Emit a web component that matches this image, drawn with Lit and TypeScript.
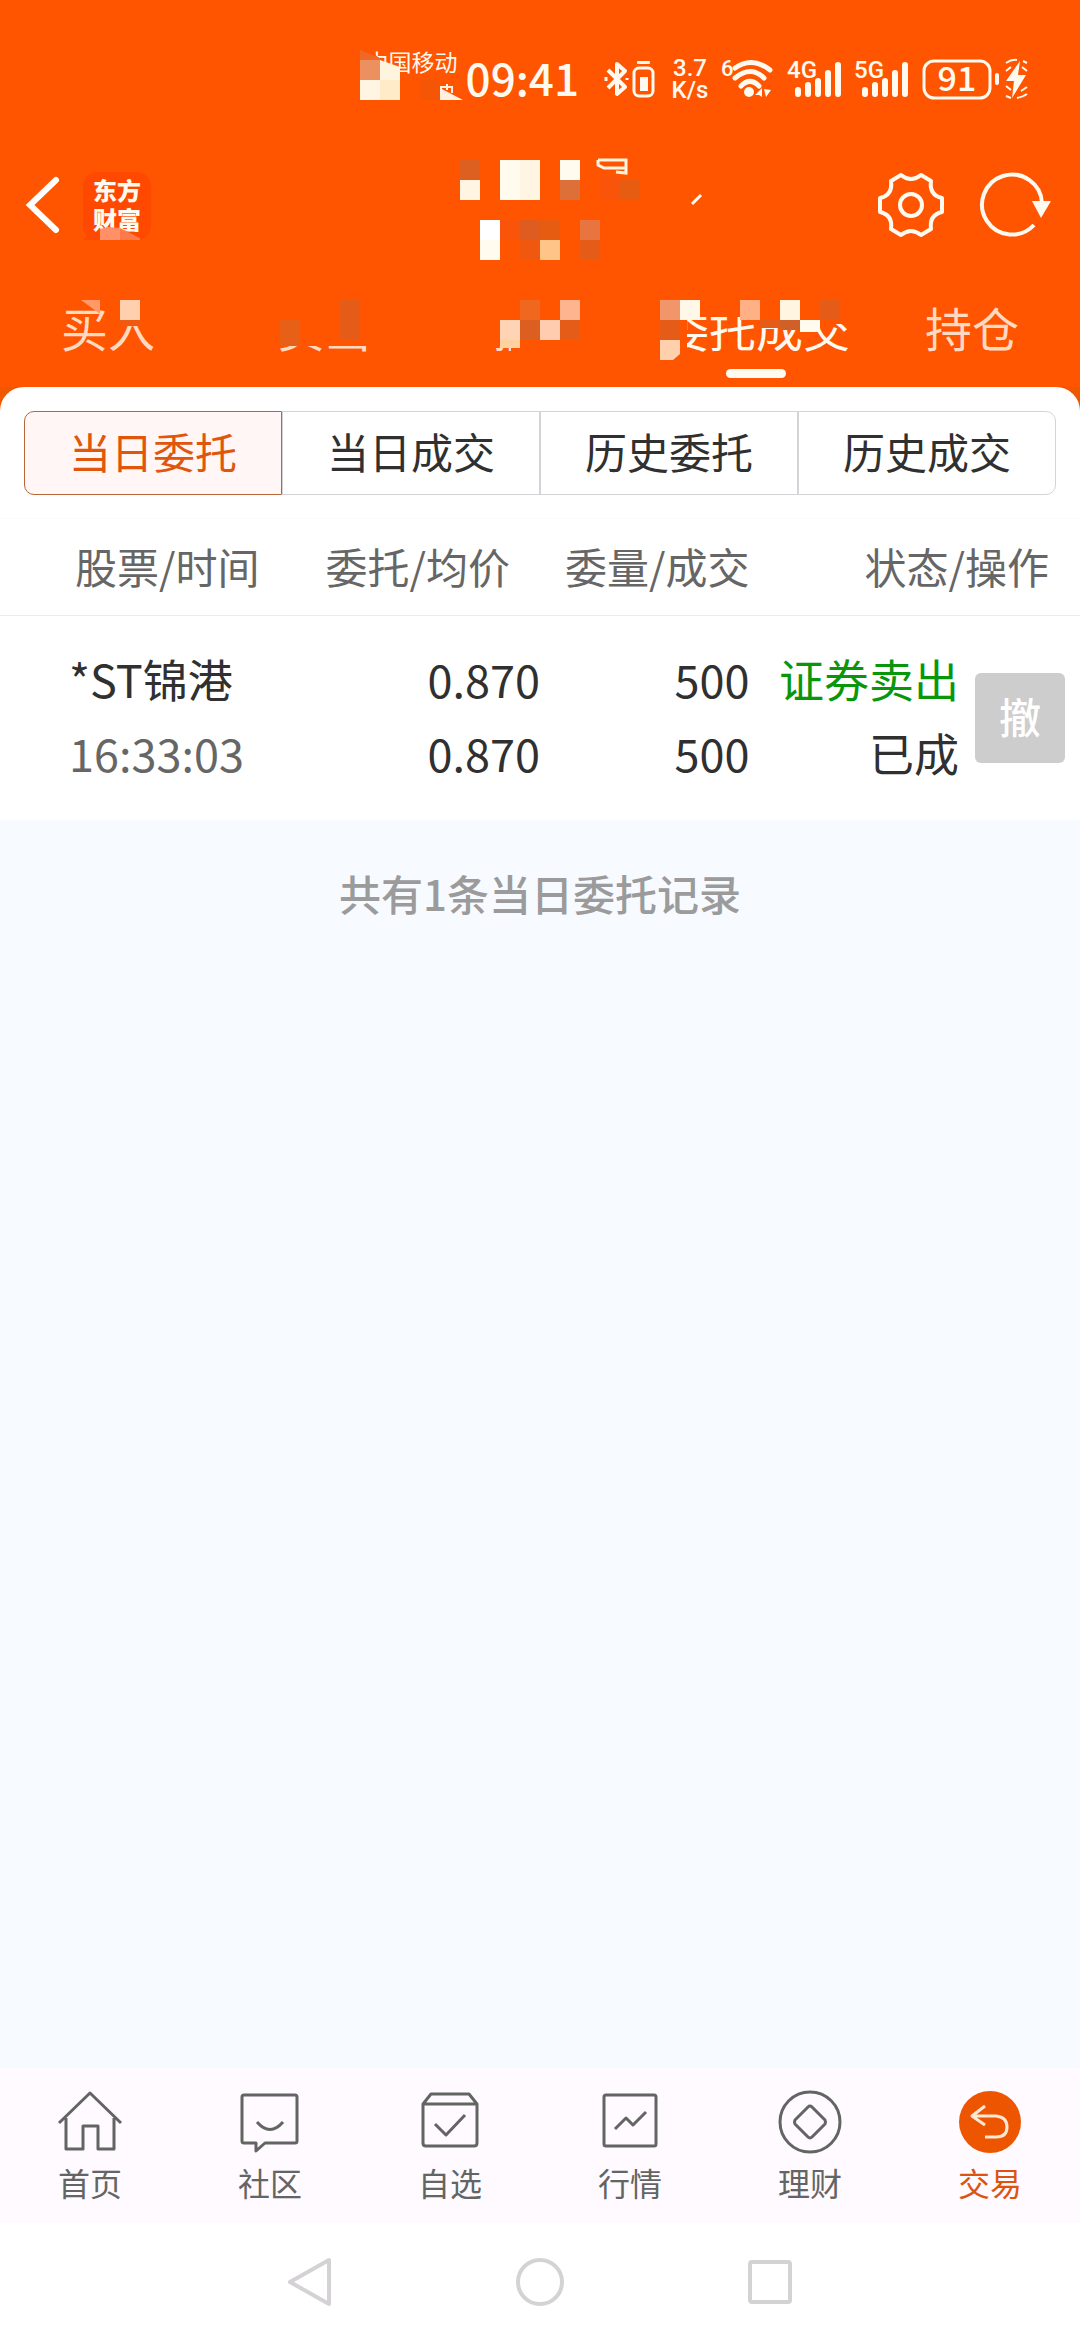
import { LitElement, html, svg, css } from "lit";
import { customElement, state } from "lit/decorators.js";
import { classMap } from "lit/directives/class-map.js";

interface Order {
  name: string;
  time: string;
  price: string;
  avg: string;
  qty: string;
  filled: string;
  side: string;
  status: string;
}

const ORDERS: Order[] = [
  {
    name: "*ST锦港",
    time: "16:33:03",
    price: "0.870",
    avg: "0.870",
    qty: "500",
    filled: "500",
    side: "证券卖出",
    status: "已成",
  },
];

const TABS = ["买入", "卖出", "撤单", "委托成交", "持仓"];
const SEGMENTS = ["当日委托", "当日成交", "历史委托", "历史成交"];

const MENU = [
  {
    label: "首页",
    icon: svg`<path d="M1 33 32 3 63 33M8 28V59H25V36H40V59H56V28"/>`,
  },
  {
    label: "社区",
    icon: svg`<path d="M6 5H57Q59 5 59 7V51Q59 53 57 53H27L18 61V53H6Q4 53 4 51V7Q4 5 6 5ZM19 32Q32 47 45 32"/>`,
  },
  {
    label: "自选",
    icon: svg`<path d="M5 14V53Q5 56 8 56H56Q59 56 59 53V14L51 4H13ZM5 14H59M17 34 28 45 47 25"/>`,
  },
  {
    label: "行情",
    icon: svg`<rect x="6" y="5" width="52" height="51" rx="2"/><path d="M17 39 28 28 35 35 48 22"/>`,
  },
  {
    label: "理财",
    icon: svg`<circle cx="32" cy="32" r="30"/><path d="M30 17Q32 15 34 17L47 30Q48 32 47 34L34 47Q32 49 30 47L17 34Q16 32 17 30Z"/>`,
  },
  {
    label: "交易",
    icon: svg`<circle class="disc" cx="32" cy="32" r="31"/><path class="arrow" d="M27 16 14 26 27 35M15 26H38Q49 27 49 37T38 47H27"/>`,
  },
];

const signal = (label: string) => html`
  <svg class="signal" width="54" height="41" viewBox="0 0 54 41" role="img" aria-label=${label}>
    <text x="-1" y="19" font-size="24">${label}</text>
    <path d="M10 31V35M20 26V35M30 22V35M40 14V35M50 6V35" stroke-width="6" stroke-linecap="round" />
  </svg>
`;

// Privacy mosaic: [x, y, width, height, colour]
const COVER: [number, number, number, number, string][] = [
  [360, 60, 20, 20, "#ed9060"],
  [360, 80, 20, 20, "#fff5e2"],
  [380, 80, 20, 20, "#ffebc8"],
  [420, 80, 20, 20, "#f45606"],
  [460, 160, 20, 20, "#de6020"],
  [460, 180, 20, 20, "#fff5e2"],
  [500, 160, 20, 40, "#fffbee"],
  [520, 160, 20, 40, "#fff5e2"],
  [560, 160, 20, 20, "#fffbee"],
  [560, 180, 20, 20, "#dc7038"],
  [600, 175, 20, 25, "#fa540a"],
  [620, 180, 20, 20, "#e65c10"],
  [480, 220, 20, 20, "#ffffff"],
  [480, 240, 20, 20, "#fffbee"],
  [500, 220, 20, 20, "#fa540a"],
  [520, 220, 20, 20, "#de5c20"],
  [540, 220, 20, 20, "#e65c10"],
  [520, 240, 20, 20, "#f05810"],
  [540, 240, 20, 20, "#ffc488"],
  [580, 220, 20, 20, "#e87440"],
  [580, 240, 20, 20, "#e45c18"],
  [100, 300, 56, 8, "#ff5500"],
  [120, 300, 20, 20, "#ffcfae"],
  [120, 320, 20, 6, "#f05a10"],
  [270, 296, 104, 50, "#ff5500"],
  [280, 320, 20, 26, "#e66018"],
  [340, 300, 20, 40, "#e45c18"],
  [486, 296, 108, 50, "#ff5500"],
  [511, 340, 84, 18, "#ff5500"],
  [520, 300, 20, 20, "#f06820"],
  [560, 300, 20, 20, "#ffb490"],
  [500, 320, 20, 20, "#ffd4b4"],
  [520, 320, 20, 20, "#dc5e20"],
  [540, 320, 20, 20, "#ffccb0"],
  [560, 320, 20, 20, "#e45c18"],
  [500, 340, 20, 8, "#ffd0a0"],
  [656, 300, 31, 60, "#ff5500"],
  [680, 296, 174, 21, "#ff5500"],
  [754, 300, 100, 24, "#ff5500"],
  [660, 300, 20, 20, "#f0966a"],
  [680, 300, 20, 20, "#fff8e8"],
  [660, 320, 20, 20, "#e45c18"],
  [740, 300, 20, 20, "#ffb084"],
  [780, 300, 20, 20, "#fff5e0"],
  [820, 300, 20, 20, "#e45c18"],
  [760, 320, 20, 8, "#e45c18"],
  [780, 320, 20, 10, "#d06028"],
  [800, 320, 20, 12, "#fffbee"],
];

@customElement("app-root")
export class AppRoot extends LitElement {
  @state() private tab = 3;
  @state() private segment = 0;

  static styles = css`
    :host {
      display: flex;
      flex-direction: column;
      min-height: 100vh;
      background: #f7faff;
      color: #303030;
      font-family: "Noto Sans CJK SC", "Noto Sans", sans-serif;
      font-size: 42px;
    }
    * {
      box-sizing: border-box;
    }
    button {
      margin: 0;
      padding: 0;
      border: 0;
      background: none;
      color: inherit;
      font: inherit;
    }
    svg {
      display: block;
      flex: none;
      overflow: visible;
    }
    .top {
      position: relative;
      background: #ff5500;
      color: #fffaf0;
    }
    .cover {
      position: absolute;
      top: 0;
      left: 0;
      width: 100%;
      pointer-events: none;
    }
    .status {
      display: flex;
      justify-content: flex-end;
      padding: 59px 52px 0 0;
      height: 100px;
    }
    .status svg {
      fill: currentColor;
      stroke: none;
    }
    .status path {
      stroke: currentColor;
    }
    .status .line {
      fill: none;
      stroke: currentColor;
    }
    .status .solid {
      stroke: none;
    }
    .carrier {
      font-size: 23px;
      line-height: 22px;
      margin-top: -9px;
      margin-right: 8px;
    }
    .clock {
      font-size: 44px;
      font-weight: 500;
      line-height: 36px;
      margin-right: 24px;
    }
    .speed {
      display: flex;
      flex-direction: column;
      align-items: center;
      width: 38px;
      font-family: Roboto, sans-serif;
      font-size: 24px;
      line-height: 22px;
      margin: -2px 12px 0 14px;
      font-weight: 500;
    }
    .signal {
      margin-left: 13px;
      font-family: Roboto, sans-serif;
      font-weight: 500;
    }
    .charge {
      margin-left: 13px;
      font-weight: 500;
    }
    .bar {
      display: flex;
      align-items: center;
      padding: 70px 27px 0 26px;
      height: 142px;
    }
    .back {
      margin-right: 23px;
    }
    .brand {
      display: flex;
      flex-direction: column;
      align-items: center;
      justify-content: center;
      width: 68px;
      height: 68px;
      padding-bottom: 4px;
      border-radius: 14px;
      background: #ff4800;
      font-size: 24px;
      font-weight: 900;
      line-height: 29px;
      margin-right: auto;
    }
    .tool + .tool {
      margin-left: 35px;
    }
    .tabs {
      display: grid;
      grid-template-columns: repeat(5, 1fr);
      padding: 55px 0 9px;
    }
    .tab {
      display: flex;
      flex-direction: column;
      align-items: center;
      gap: 12px;
      font-size: 47px;
      line-height: 60px;
      color: #ffd9c0;
      white-space: nowrap;
    }
    .tab::after {
      content: "";
      width: 60px;
      height: 9px;
      border-radius: 5px;
    }
    .tab.on {
      color: #fffaf0;
    }
    .tab.on::after {
      background: #fffaf0;
    }
    .backing {
      background: #f05800;
    }
    .sheet {
      background: #fff;
      border-radius: 24px 24px 0 0;
      padding-top: 24px;
    }
    .segments {
      display: grid;
      grid-template-columns: repeat(4, 1fr);
      margin: 0 24px 23px;
    }
    .segment {
      height: 84px;
      border: 1px solid #d4d4d8;
      line-height: 78px;
      padding-bottom: 4px;
    }
    .segment:first-child {
      border-radius: 10px 0 0 10px;
    }
    .segment:last-child {
      border-radius: 0 10px 10px 0;
    }
    .segment.on {
      border-color: #b5673a;
      background: #fff6f5;
      color: #e0560c;
    }
    table {
      width: 100%;
      table-layout: fixed;
      border-collapse: collapse;
    }
    .c1 {
      width: 28%;
    }
    .c2 {
      width: 22%;
    }
    .c3 {
      width: 19.4%;
    }
    .c4 {
      width: 19.4%;
    }
    th {
      height: 97px;
      padding: 0 0 4px;
      border-top: 1px solid #fafafa;
      border-bottom: 1px solid #ececec;
      color: #666;
      font-weight: 400;
      text-align: right;
      white-space: nowrap;
    }
    th:first-child {
      padding-left: 75px;
      text-align: left;
    }
    th:nth-child(2) {
      padding-right: 30px;
    }
    th:last-child {
      padding-right: 31px;
    }
    td {
      padding: 26px 0 30px;
      text-align: right;
      font-size: 45px;
      line-height: 74px;
      white-space: nowrap;
    }
    td:first-child {
      padding-left: 69px;
      text-align: left;
    }
    td:last-child {
      padding: 0 15px 0 0;
    }
    .time {
      color: #666;
    }
    .sell {
      color: #0a960a;
    }
    .cancel {
      display: block;
      width: 90px;
      height: 90px;
      margin-left: auto;
      border-radius: 6px;
      background: #cdcdcd;
      color: #fff;
      font-size: 42px;
      font-weight: 500;
      line-height: 86px;
      padding-bottom: 4px;
    }
    .total {
      flex: 1;
      margin: 0;
      padding-top: 42px;
      color: #9b9b9b;
      font-weight: 500;
      line-height: 62px;
      text-align: center;
    }
    .menu {
      display: grid;
      grid-template-columns: repeat(6, 1fr);
      height: 155px;
      padding-top: 22px;
      background: #fefaff;
    }
    .menu a {
      display: flex;
      flex-direction: column;
      align-items: center;
      gap: 6px;
      color: #636563;
      font-size: 32px;
      line-height: 44px;
      text-decoration: none;
    }
    .menu svg {
      fill: none;
      stroke: currentColor;
      stroke-width: 3;
      stroke-linejoin: round;
    }
    .menu .current {
      color: #dc5410;
    }
    .disc {
      fill: #ee5500;
      stroke: none;
    }
    .arrow {
      stroke: #ffe8d4;
    }
    .system {
      display: flex;
      justify-content: center;
      gap: 180px;
      height: 117px;
      padding-top: 34px;
      background: #fff;
    }
    .system button {
      height: 50px;
    }
    .system svg {
      fill: none;
      stroke: #d4d2d5;
      stroke-width: 4;
      stroke-linejoin: round;
    }
  `;

  private renderStatus() {
    return html`
      <div class="status">
        <span class="carrier">中国移动</span>
        <span class="clock">09:41</span>
        <svg width="54" height="41" viewBox="0 0 54 41" aria-label="蓝牙">
          <path class="line" d="M5 11 22 28 14 35V5L22 12 5 29" stroke-width="4" stroke-linejoin="round" />
          <path class="line" d="M3 18V22M24 19V21" stroke-width="3" />
          <rect class="line" x="31" y="9" width="19" height="28" rx="5" stroke-width="3" />
          <rect x="34" y="2" width="13" height="3" rx="1" />
          <rect x="37" y="18" width="8" height="14" />
        </svg>
        <span class="speed"><span>3.7</span><span>K/s</span></span>
        <svg width="54" height="41" viewBox="0 0 54 41" aria-label="Wi-Fi">
          <text x="0" y="17" font-size="22" font-weight="500" font-family="Roboto, sans-serif">6</text>
          <path class="line" d="M14 9Q31 -3 49 11M14 19Q30 6 43 19M20 27Q29 18 38 27" stroke-width="5" stroke-linecap="round" />
          <circle cx="28" cy="33" r="5" />
          <path class="solid" d="M41 29V38L38 36H34ZM43 30 50 31 45 38Z" />
        </svg>
        ${signal("4G")} ${signal("5G")}
        <svg class="charge" width="106" height="41" viewBox="0 0 106 41" role="img" aria-label="电量 91">
          <rect class="line" x="2" y="2" width="66" height="37" rx="10" stroke-width="3" />
          <text x="35" y="32" font-size="34" text-anchor="middle">91</text>
          <rect x="73" y="14" width="4" height="12" rx="2" />
          <path class="solid" d="M98 2 84 22H92L90 39 104 16H96Z" />
          <path class="line" d="M84 4Q90 0 95 1M101 2 105 4M84 12 89 8M100 8 105 12M84 27 89 31M99 32 105 28M84 37 89 39M95 39Q101 38 105 35" stroke-width="2" />
        </svg>
      </div>
    `;
  }

  private renderCover() {
    return html`
      <svg class="cover" viewBox="0 0 1080 387" aria-hidden="true">
        <path d="M360 46H374V54L384 62H360Z" fill="#ff5500" />
        <path d="M360 50 380 58V60H360Z" fill="#f06828" />
        <path d="M380 60 400 67V80H380Z" fill="#fff5de" />
        <path d="M440 88 463 100H440Z" fill="#fff0e0" />
        <path d="M441 91V87H452V93M447 84V90" fill="none" stroke="#fff0e0" stroke-width="2" />
        ${COVER.map(
          ([x, y, w, h, fill]) => svg`<rect x=${x} y=${y} width=${w} height=${h} fill=${fill} />`
        )}
        <path d="M100 229 108 227 120 228V240H100Z" fill="#ff9068" />
        <path d="M120 228 140 238V240H120Z" fill="#ff7a48" />
        <path d="M83 240 92 232 100 240Z" fill="#ff4800" />
        <path d="M81 300H100V314Z" fill="#ff9a68" />
        <path d="M660 340H680V354L673 360H660Z" fill="#ffd0ac" />
        <path d="M598 160H626V173L616 172M598 160V165L604 168H625" fill="none" stroke="#fff5e2" stroke-width="3" />
        <path d="M692 204 701 195" stroke="#fffaf0" stroke-width="3" />
      </svg>
    `;
  }

  render() {
    return html`
      <header class="top">
        ${this.renderStatus()}
        <div class="bar">
          <button class="back" aria-label="返回">
            <svg width="34" height="58" viewBox="0 0 34 58" fill="none" stroke="#fff" stroke-width="6" stroke-linecap="round">
              <path d="M30 3 4 28 30 53" />
            </svg>
          </button>
          <div class="brand"><span>东方</span><span>财富</span></div>
          <button class="tool" aria-label="设置">
            <svg width="66" height="66" viewBox="-33 -32 66 66" fill="none" stroke="#fffaf0" stroke-width="4" stroke-linejoin="round">
              <path d="M-10 -30Q0 -22 10 -30L20 -24Q18 -10 31 -7V7Q18 10 20 24L10 30Q0 22 -10 30L-20 24Q-18 10 -31 7V-7Q-18 -10 -20 -24Z" />
              <circle r="11" />
            </svg>
          </button>
          <button class="tool" aria-label="刷新">
            <svg width="74" height="66" viewBox="-33 -32 74 66" fill="none" stroke="#fffaf0" stroke-width="4">
              <path d="M30 -2A30 30 0 1 0 22 20" />
              <path d="M20 -4H39L29 13Z" fill="#fffaf0" stroke="none" />
            </svg>
          </button>
        </div>
        <nav class="tabs">
          ${TABS.map(
            (t, i) => html`<button
              class=${classMap({ tab: true, on: i === this.tab })}
              @click=${() => (this.tab = i)}
            >
              ${t}
            </button>`
          )}
        </nav>
        ${this.renderCover()}
      </header>

      <div class="backing">
        <main class="sheet">
          <div class="segments">
            ${SEGMENTS.map(
              (s, i) => html`<button
                class=${classMap({ segment: true, on: i === this.segment })}
                @click=${() => (this.segment = i)}
              >
                ${s}
              </button>`
            )}
          </div>
          <table>
            <colgroup>
              <col class="c1" />
              <col class="c2" />
              <col class="c3" />
              <col class="c4" />
              <col />
            </colgroup>
            <thead>
              <tr>
                <th>股票/时间</th>
                <th>委托/均价</th>
                <th>委量/成交</th>
                <th colspan="2">状态/操作</th>
              </tr>
            </thead>
            <tbody>
              ${ORDERS.map(
                (o) => html`<tr>
                  <td><div>${o.name}</div><div class="time">${o.time}</div></td>
                  <td><div>${o.price}</div><div>${o.avg}</div></td>
                  <td><div>${o.qty}</div><div>${o.filled}</div></td>
                  <td><div class="sell">${o.side}</div><div>${o.status}</div></td>
                  <td><button class="cancel" disabled>撤</button></td>
                </tr>`
              )}
            </tbody>
          </table>
        </main>
      </div>

      <p class="total">共有${ORDERS.length}条当日委托记录</p>

      <nav class="menu">
        ${MENU.map(
          (m, i) => html`<a href="#" class=${classMap({ current: i === 5 })}>
            <svg width="64" height="64" viewBox="0 0 64 64">${m.icon}</svg>
            <span>${m.label}</span>
          </a>`
        )}
      </nav>

      <footer class="system">
        <button aria-label="返回">
          <svg width="50" height="50" viewBox="0 0 50 50"><path d="M44 3V47L5 25Z" /></svg>
        </button>
        <button aria-label="主屏幕">
          <svg width="50" height="50" viewBox="0 0 50 50"><circle cx="25" cy="25" r="22" /></svg>
        </button>
        <button aria-label="最近任务">
          <svg width="50" height="50" viewBox="0 0 50 50"><rect x="5" y="5" width="40" height="40" rx="2" /></svg>
        </button>
      </footer>
    `;
  }
}
